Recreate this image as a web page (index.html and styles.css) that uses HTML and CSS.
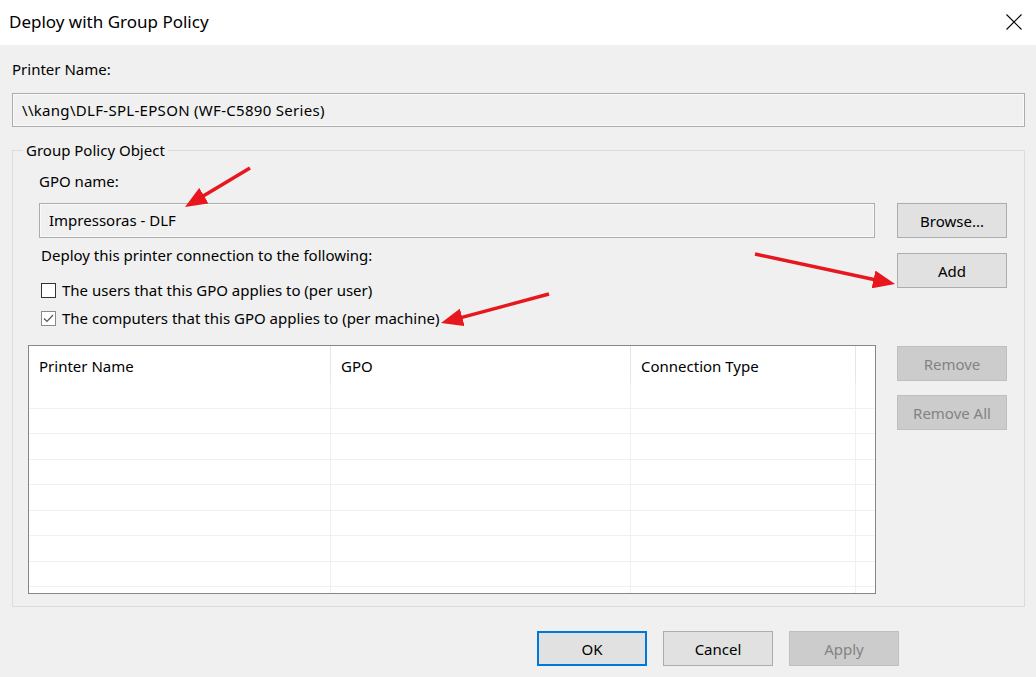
FILE: index.html
```html
<!DOCTYPE html>
<html>
<head>
<meta charset="utf-8">
<link rel="stylesheet" href="styles.css">
</head>
<body>
<div class="window">
  <div class="titlebar">
    <div class="title">Deploy with Group Policy</div>
    <svg class="close" width="16" height="16" viewBox="0 0 16 16"><path d="M0.5 0.5 L15.5 15.5 M15.5 0.5 L0.5 15.5" stroke="#000" stroke-width="1.1" fill="none"/></svg>
  </div>
  <div class="content">
    <div class="label">Printer Name:</div>
    <div class="textbox wide">\\kang\DLF-SPL-EPSON (WF-C5890 Series)</div>
    <fieldset class="group">
      <legend>Group Policy Object</legend>
      <div class="group-inner">
        <div class="left">
          <div class="label gpo-label">GPO name:</div>
          <div class="textbox gpo-box">Impressoras - DLF</div>
          <div class="label deploy-label">Deploy this printer connection to the following:</div>
          <div class="check first"><span class="box"></span><span>The users that this GPO applies to (per user)</span></div>
          <div class="check second"><span class="box checked"><svg width="11" height="11" viewBox="0 0 11 11"><path d="M1 5.5 L4 8.5 L10 2" stroke="#555" stroke-width="1.2" fill="none"/></svg></span><span>The computers that this GPO applies to (per machine)</span></div>
          <div class="list">
            <div class="row head">
              <div class="cell">Printer Name</div>
              <div class="cell">GPO</div>
              <div class="cell">Connection Type</div>
              <div class="cell last"></div>
            </div>
            <div class="row"><div class="cell"></div><div class="cell"></div><div class="cell"></div><div class="cell last"></div></div>
            <div class="row"><div class="cell"></div><div class="cell"></div><div class="cell"></div><div class="cell last"></div></div>
            <div class="row"><div class="cell"></div><div class="cell"></div><div class="cell"></div><div class="cell last"></div></div>
            <div class="row"><div class="cell"></div><div class="cell"></div><div class="cell"></div><div class="cell last"></div></div>
            <div class="row"><div class="cell"></div><div class="cell"></div><div class="cell"></div><div class="cell last"></div></div>
            <div class="row"><div class="cell"></div><div class="cell"></div><div class="cell"></div><div class="cell last"></div></div>
            <div class="row"><div class="cell"></div><div class="cell"></div><div class="cell"></div><div class="cell last"></div></div>
            <div class="row"><div class="cell"></div><div class="cell"></div><div class="cell"></div><div class="cell last"></div></div>
            <div class="row"><div class="cell"></div><div class="cell"></div><div class="cell"></div><div class="cell last"></div></div>
          </div>
        </div>
        <div class="right">
          <button class="btn browse">Browse...</button>
          <button class="btn add">Add</button>
          <button class="btn disabled remove">Remove</button>
          <button class="btn disabled remove-all">Remove All</button>
        </div>
      </div>
    </fieldset>
    <div class="footer">
      <button class="btn default">OK</button>
      <button class="btn">Cancel</button>
      <button class="btn disabled">Apply</button>
    </div>
  </div>
  <svg class="arrows" width="1036" height="677" viewBox="0 0 1036 677">
    <defs>
      <marker id="ah" viewBox="0 0 22 18" markerWidth="22" markerHeight="18" refX="10" refY="9" orient="auto" markerUnits="userSpaceOnUse">
        <path d="M0 0 L22 9 L0 18 Z" fill="#e8161d"/>
      </marker>
    </defs>
    <g stroke="#e8161d" stroke-width="3.5" fill="none" marker-end="url(#ah)">
      <line x1="250" y1="168" x2="195.3" y2="200.8"/>
      <line x1="755" y1="254" x2="883.3" y2="281.5"/>
      <line x1="549" y1="294" x2="452.6" y2="319.9"/>
    </g>
  </svg>
</div>
</body>
</html>
```

FILE: styles.css
```css
* { box-sizing: border-box; }
html, body { margin: 0; padding: 0; }
body {
  font-family: "Noto Sans", "Open Sans", sans-serif;
  font-size: 15px;
  color: #000;
  background: #f0f0f0;
}
.window {
  position: relative;
  width: 1036px;
  height: 677px;
  overflow: hidden;
  background: #f0f0f0;
}
.titlebar {
  height: 45px;
  background: #fff;
  display: flex;
  align-items: center;
  justify-content: space-between;
  padding: 0 14px 0 9px;
}
.title {
  font-size: 17px;
  margin-top: -2px;
}
.close { margin-top: -1px; }
.content {
  padding: 14px 12px 0 12px;
}
.label {
  height: 20px;
  line-height: 20px;
  white-space: nowrap;
}
.textbox {
  height: 34px;
  border: 1px solid #adadad;
  background: #f0f0f0;
  box-shadow: inset 0 0 0 1px #f9f9f9;
  line-height: 32px;
  padding-left: 9px;
  white-space: nowrap;
}
.textbox.wide {
  margin-top: 14px;
  width: 1013px;
  letter-spacing: 0.3px;
}
.group {
  margin: 13px 0 0 0;
  padding: 0;
  width: 1013px;
  border: 1px solid #dcdcdc;
  min-width: 0;
}
.group legend {
  margin-left: 10px;
  padding: 0 3px;
  height: 20px;
  line-height: 20px;
}
.group-inner {
  display: flex;
  gap: 21px;
  padding: 0 0 12px 15px;
}
.left {
  width: 848px;
  display: flex;
  flex-direction: column;
}
.gpo-label {
  margin-top: 11px;
  margin-left: 11px;
}
.gpo-box {
  margin-top: 12px;
  margin-left: 11px;
  width: 836px;
  height: 35px;
  line-height: 33px;
}
.deploy-label {
  margin-top: 7px;
  margin-left: 13px;
}
.check {
  display: flex;
  align-items: center;
  height: 20px;
  gap: 6px;
  margin-left: 13px;
  white-space: nowrap;
}
.check.first { margin-top: 15px; }
.check.second { margin-top: 8px; }
.box {
  width: 15px;
  height: 15px;
  border: 1px solid #333;
  background: #fff;
  display: flex;
  align-items: center;
  justify-content: center;
  flex: none;
}
.box.checked { border-color: #8a8a8a; }
.list {
  margin-top: 17px;
  width: 848px;
  height: 249px;
  border: 1px solid #828790;
  background: #fff;
  overflow: hidden;
}
.row {
  display: grid;
  grid-template-columns: 302px 300px 225px 1fr;
  height: 25.5px;
  border-bottom: 1px solid #f0f0f0;
}
.row .cell {
  border-right: 1px solid #f0f0f0;
}
.row .cell.last { border-right: none; }
.row.head {
  height: 37px;
  border-bottom: none;
}
.row.head .cell {
  border-right: 1px solid #e5e5e5;
  padding-left: 10px;
  line-height: 40px;
  white-space: nowrap;
}
.row.head .cell.last { border-right: none; }
.right {
  width: 110px;
  display: flex;
  flex-direction: column;
}
.btn {
  font-family: inherit;
  font-size: 15px;
  width: 110px;
  height: 35px;
  background: #e1e1e1;
  border: 1px solid #adadad;
  color: #000;
  padding: 0;
  margin: 0;
}
.btn.disabled {
  background: #cccccc;
  border-color: #bfbfbf;
  color: #838383;
}
.btn.default {
  border: 2px solid #0078d7;
}
.browse { margin-top: 43px; }
.add { margin-top: 15px; }
.remove { margin-top: 58px; }
.remove-all { margin-top: 14px; }
.footer {
  display: flex;
  justify-content: flex-end;
  gap: 16px;
  margin-top: 24px;
  padding-right: 125px;
}
.footer .btn { width: 110px; }
.arrows {
  position: absolute;
  left: 0;
  top: 0;
  pointer-events: none;
}
```
